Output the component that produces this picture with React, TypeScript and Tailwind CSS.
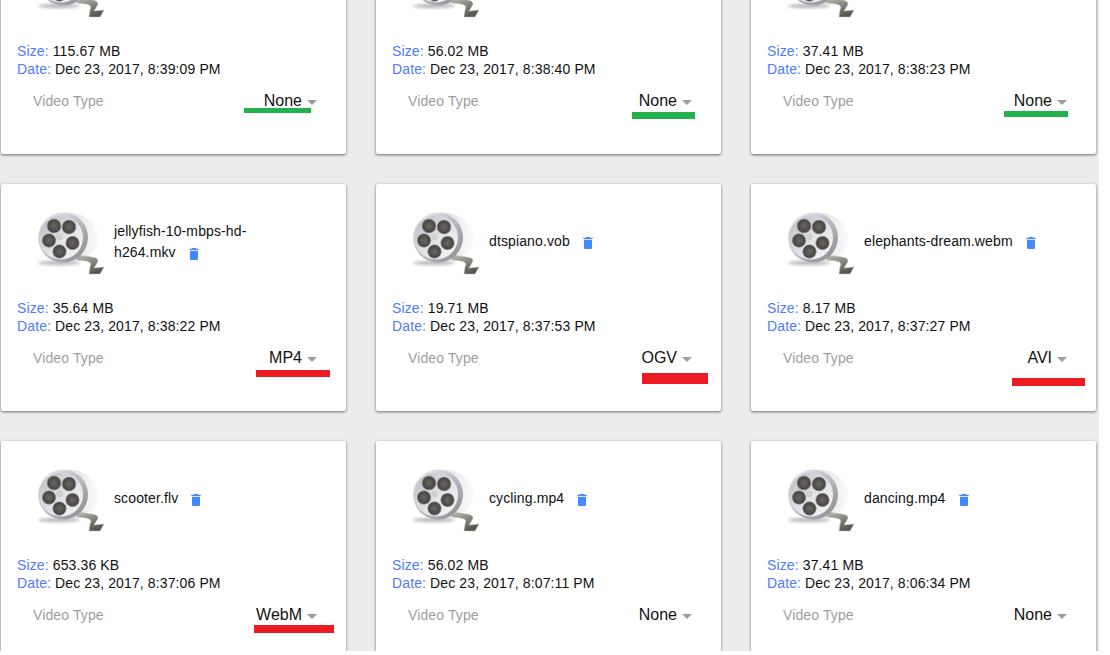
import { useId } from "react";

interface VideoCard {
  name?: string;
  size: string;
  date: string;
  type: string;
  // hand-drawn marker under the dropdown, relative to the card
  mark: { left: number; top: number; width: number; height: number; color: string } | null;
}

const GREEN = "#22b14c";
const RED = "#ed1c24";

const cards: VideoCard[] = [
  { size: "115.67 MB", date: "Dec 23, 2017, 8:39:09 PM", type: "None", mark: { left: 243, top: 181, width: 67, height: 5, color: GREEN } },
  { size: "56.02 MB", date: "Dec 23, 2017, 8:38:40 PM", type: "None", mark: { left: 256, top: 185, width: 63, height: 7, color: GREEN } },
  { size: "37.41 MB", date: "Dec 23, 2017, 8:38:23 PM", type: "None", mark: { left: 253, top: 184, width: 64, height: 6, color: GREEN } },
  { name: "jellyfish-10-mbps-hd-h264.mkv", size: "35.64 MB", date: "Dec 23, 2017, 8:38:22 PM", type: "MP4", mark: { left: 255, top: 186, width: 74, height: 7, color: RED } },
  { name: "dtspiano.vob", size: "19.71 MB", date: "Dec 23, 2017, 8:37:53 PM", type: "OGV", mark: { left: 266, top: 189, width: 66, height: 11, color: RED } },
  { name: "elephants-dream.webm", size: "8.17 MB", date: "Dec 23, 2017, 8:37:27 PM", type: "AVI", mark: { left: 261, top: 194, width: 73, height: 8, color: RED } },
  { name: "scooter.flv", size: "653.36 KB", date: "Dec 23, 2017, 8:37:06 PM", type: "WebM", mark: { left: 253, top: 184, width: 80, height: 8, color: RED } },
  { name: "cycling.mp4", size: "56.02 MB", date: "Dec 23, 2017, 8:07:11 PM", type: "None", mark: null },
  { name: "dancing.mp4", size: "37.41 MB", date: "Dec 23, 2017, 8:06:34 PM", type: "None", mark: null },
];

function ReelIcon() {
  const id = useId();
  return (
    <svg width="76" height="74" viewBox="0 0 76 74" className="shrink-0">
      <defs>
        <linearGradient id={`${id}back`} x1="0" y1="0" x2="1" y2="0">
          <stop offset="0" stopColor="#b9b9be" />
          <stop offset="1" stopColor="#f8f8f8" />
        </linearGradient>
        <linearGradient id={`${id}rim`} x1="0" y1="0" x2="1" y2="1">
          <stop offset="0" stopColor="#f4f4f8" />
          <stop offset="0.55" stopColor="#b6b6be" />
          <stop offset="1" stopColor="#85858f" />
        </linearGradient>
        <linearGradient id={`${id}face`} x1="0" y1="0" x2="1" y2="1">
          <stop offset="0" stopColor="#b8b8c0" />
          <stop offset="0.55" stopColor="#e4e4e8" />
          <stop offset="1" stopColor="#f8f8fa" />
        </linearGradient>
        <radialGradient id={`${id}hole`} cx="0.5" cy="0.5" r="0.6">
          <stop offset="0" stopColor="#6b6763" />
          <stop offset="1" stopColor="#3d3a37" />
        </radialGradient>
        <linearGradient id={`${id}film`} x1="0" y1="0" x2="0.6" y2="1">
          <stop offset="0" stopColor="#bdbab2" />
          <stop offset="1" stopColor="#57534d" />
        </linearGradient>
        <filter id={`${id}blur`} x="-20%" y="-100%" width="140%" height="300%">
          <feGaussianBlur stdDeviation="1.6" />
        </filter>
      </defs>
      <ellipse cx="24" cy="56" rx="21" ry="2.2" fill="#8a8a8a" opacity="0.6" filter={`url(#${id}blur)`} />
      <path d="M28 6 C44 4 62 12 64 30 C65 44 50 54 32 56 Z" fill={`url(#${id}back)`} opacity="0.5" />
      <path
        d="M42 48 L57 50 C63 51 64 53 62 56 L59 61 L69 60 L65 67 L54 67 L55 60 C57 56 55 55 51 54 L42 53 Z"
        fill={`url(#${id}film)`}
        stroke="#c4c1ba"
        strokeWidth="0.5"
      />
      <circle cx="28" cy="30.5" r="25" fill={`url(#${id}rim)`} />
      <circle cx="26" cy="30.5" r="22" fill={`url(#${id}face)`} />
      <circle cx="19" cy="19" r="6.9" fill={`url(#${id}hole)`} stroke="#8d8d93" strokeWidth="0.7" />
      <circle cx="34" cy="20" r="6.9" fill={`url(#${id}hole)`} stroke="#8d8d93" strokeWidth="0.7" />
      <circle cx="14" cy="33.5" r="6.7" fill={`url(#${id}hole)`} stroke="#8d8d93" strokeWidth="0.7" />
      <circle cx="37.5" cy="36" r="6.7" fill={`url(#${id}hole)`} stroke="#8d8d93" strokeWidth="0.7" />
      <circle cx="24.5" cy="44.5" r="6.7" fill={`url(#${id}hole)`} stroke="#8d8d93" strokeWidth="0.7" />
      <circle cx="24.5" cy="30" r="3.2" fill="#cfcfd4" />
    </svg>
  );
}

function TrashIcon() {
  return (
    <svg viewBox="0 0 24 24" width="16" height="16" fill="#448aff" className="-my-1 ml-[10px] inline-block align-[-1px]">
      <path d="M6 19c0 1.1.9 2 2 2h8c1.1 0 2-.9 2-2V7H6v12zM19 4h-3.5l-1-1h-5l-1 1H5v2h14V4z" />
    </svg>
  );
}

function Card({ card }: { card: VideoCard }) {
  return (
    <div className="relative h-[227px] rounded-[2px] bg-white text-[14px] tracking-[0.12px] text-[#111] shadow-[0_1px_3px_rgba(0,0,0,0.55)]">
      <div className="flex h-[96px] items-center pl-[34px] pt-[24px]">
        <ReelIcon />
        {card.name && (
          <div className="mb-[5px] ml-[3px] w-[185px] leading-[21px]">
            {card.name}
            <TrashIcon />
          </div>
        )}
      </div>
      <div className="mt-[19px] pl-[16px] leading-[18px]">
        <div>
          <span className="text-[#4d7cfe]">Size:</span> {card.size}
        </div>
        <div>
          <span className="text-[#4d7cfe]">Date:</span> {card.date}
        </div>
      </div>
      <div className="mt-[7px] flex h-[32px] items-center justify-between pl-[32px] pr-[29px]">
        <span className="text-[#9e9e9e]">Video Type</span>
        <div className="flex items-center gap-[5px] text-[16px] tracking-normal">
          <span>{card.type}</span>
          <span className="mt-[2px] h-0 w-0 border-x-[5px] border-t-[5px] border-x-transparent border-t-[#9e9e9e]" />
        </div>
      </div>
      {card.mark && (
        <div
          className="absolute"
          style={{
            left: card.mark.left,
            top: card.mark.top,
            width: card.mark.width,
            height: card.mark.height,
            backgroundColor: card.mark.color,
          }}
        />
      )}
    </div>
  );
}

export default function App() {
  return (
    <div className="h-[655px] w-[1110px] overflow-hidden bg-white font-['Liberation_Sans',Arial,sans-serif]">
      <div className="h-[651px] w-[1099px] overflow-hidden bg-[#ececec]">
        <div className="ml-[1px] mt-[-73px] grid w-[1095px] grid-cols-[345px_345px_345px] gap-[30px]">
          {cards.map((card, index) => (
            <Card key={index} card={card} />
          ))}
        </div>
      </div>
    </div>
  );
}
